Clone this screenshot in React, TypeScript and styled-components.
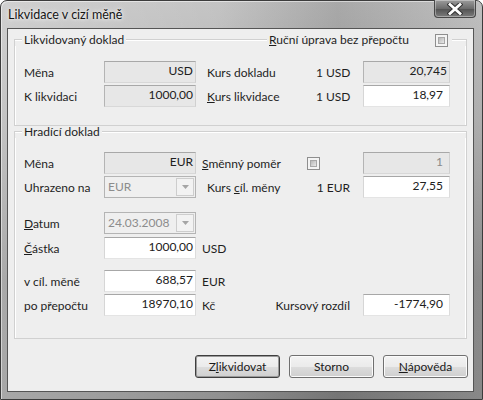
import React from "react";
import styled, { createGlobalStyle, css } from "styled-components";

const Global = createGlobalStyle`
  html, body { margin: 0; padding: 0; background: #ffffff; }
  body { font-family: "Lato", "Noto Sans", sans-serif; font-size: 12px; color: #1e1e1e; }
`;

const Window = styled.div`
  width: 483px;
  height: 400px;
  box-sizing: border-box;
  display: flex;
  flex-direction: column;
  border: 1px solid #3c3c3c;
  border-radius: 7px 7px 0 0;
  background:
    linear-gradient(to right, rgba(255,255,255,0.3), rgba(255,255,255,0.12) 45%, rgba(0,0,0,0.1) 70%, rgba(255,255,255,0.05)),
    linear-gradient(to bottom, #bcbcbc, #aaaaaa 30%, #858585 70%, #828282);
  box-shadow: inset 1px 1px 0 rgba(255,255,255,0.5);
`;

const TitleBar = styled.div`
  height: 27px;
  display: flex;
  justify-content: space-between;
  align-items: flex-start;
  padding: 0 6px 0 7px;
`;

const Title = styled.span`
  margin-top: 6px;
  font-size: 12.5px;
  color: #151515;
  text-shadow: 0 0 6px rgba(255,255,255,0.9), 0 0 3px rgba(255,255,255,0.8);
`;

const CloseButton = styled.div`
  width: 42px;
  height: 18px;
  box-sizing: border-box;
  margin-top: -1px;
  border: 1px solid #474747;
  border-top: none;
  border-radius: 0 0 4px 4px;
  background: linear-gradient(to bottom, #9c9c9c, #6c6c6c 50%, #545454 55%, #7c7c7c);
  box-shadow: inset 0 0 0 1px rgba(255,255,255,0.35);
  display: flex;
  align-items: center;
  justify-content: center;
`;

const Client = styled.div`
  flex: 1;
  margin: 0 8px 7px 6px;
  border: 1px solid #555555;
  background: #eeeeee;
  display: flex;
  flex-direction: column;
  padding: 5px 6px 0 6px;
`;

const GroupHeader = styled.div`
  height: 12px;
  display: flex;
  align-items: center;
`;

const Rule = styled.div<{ $edge?: "left" | "right"; $width?: number }>`
  align-self: flex-end;
  height: 6px;
  border-top: 1px solid #d0d0d0;
  box-shadow: inset 0 1px 0 #ffffff;
  ${(p) => (p.$width ? css`width: ${p.$width}px;` : css`flex: 1;`)}
  ${(p) => p.$edge === "left" && css`border-left: 1px solid #d0d0d0;`}
  ${(p) => p.$edge === "right" && css`border-right: 1px solid #d0d0d0;`}
`;

const Legend = styled.span<{ $gapAfter?: number }>`
  padding: 0 2px 0 2px;
  margin-right: ${(p) => p.$gapAfter ?? 0}px;
  line-height: 12px;
  white-space: nowrap;
`;

const GroupBody = styled.div<{ $top: number; $bottom: number }>`
  border: 1px solid #d0d0d0;
  border-top: none;
  box-shadow: inset 1px 0 0 #ffffff, inset -1px 0 0 #ffffff;
  padding: ${(p) => p.$top}px 15px ${(p) => p.$bottom}px 9px;
  display: flex;
  flex-direction: column;
`;

const Row = styled.div<{ $space?: number }>`
  display: grid;
  grid-template-columns: 80px 92px 6px 114px 47px 87px;
  grid-template-rows: 22px;
  align-items: center;
  margin-top: ${(p) => p.$space ?? 2}px;
  &:first-child { margin-top: 0; }
  & > * { grid-row: 1; }
`;

const Label = styled.span<{ $col?: number; $indent?: number; $span?: number; $right?: boolean }>`
  grid-column: ${(p) => p.$col ?? 1} / span ${(p) => p.$span ?? 1};
  padding-left: ${(p) => p.$indent ?? 0}px;
  white-space: nowrap;
  ${(p) => p.$right && css`text-align: right; padding-right: 13px;`}
`;

const Unit = styled.span`
  grid-column: 5;
  text-align: right;
  padding-right: 13px;
  white-space: nowrap;
`;

const Field = styled.div<{ $col: number; $edit?: boolean; $pad?: number; $dim?: boolean }>`
  grid-column: ${(p) => p.$col};
  height: 22px;
  box-sizing: border-box;
  border: 1px solid;
  text-align: right;
  line-height: 16px;
  padding: 1px ${(p) => p.$pad ?? 2}px 0 2px;
  color: ${(p) => (p.$dim ? "#8a8a8a" : "#202020")};
  ${(p) =>
    p.$edit
      ? css`
          background: #ffffff;
          border-color: #a7a7a7 #dcdcdc #e4e4e4 #d6d6d6;
        `
      : css`
          background: #e7e7e7;
          border-color: #a8a8a8 #d0d0d0 #d8d8d8 #b4b4b4;
        `}
`;

const Combo = styled.div`
  grid-column: 2;
  height: 22px;
  box-sizing: border-box;
  border: 1px solid #b4b4b4;
  background: #efefef;
  display: flex;
  align-items: stretch;
  color: #8c8c8c;
`;

const ComboText = styled.span`
  flex: 1;
  padding: 2px 0 0 3px;
  line-height: 16px;
`;

const ComboArrow = styled.div`
  width: 18px;
  margin: 1px;
  box-sizing: border-box;
  border: 1px solid #cdcdcd;
  background: #f2f2f2;
  display: flex;
  align-items: center;
  justify-content: center;
`;

const Check = styled.span`
  display: inline-block;
  width: 13px;
  height: 13px;
  box-sizing: border-box;
  border: 1px solid #8e8e8e;
  background: #f4f4f4;
  padding: 2px;
  &::after {
    content: "";
    display: block;
    width: 100%;
    height: 100%;
    background: linear-gradient(135deg, #b8b8b8, #e8e8e8);
    border: 1px solid #a8a8a8;
    box-sizing: border-box;
  }
`;

const CheckCell = styled.span`
  grid-column: 4 / span 2;
  display: grid;
  grid-template-columns: 105px 13px;
  align-items: center;
`;

const Key = styled.span`
  text-decoration: underline;
  text-underline-offset: 1px;
`;

const Buttons = styled.div`
  display: flex;
  justify-content: flex-end;
  gap: 9px;
  margin-top: 16px;
  margin-right: -1px;
`;

const Button = styled.div<{ $primary?: boolean }>`
  width: 85px;
  height: 23px;
  box-sizing: border-box;
  border: 1px solid ${(p) => (p.$primary ? "#3e3e3e" : "#707070")};
  border-radius: 3px;
  background: linear-gradient(to bottom, #f3f3f3, #ebebeb 50%, #dddddd 51%, #cfcfcf);
  box-shadow: inset 0 0 0 1px ${(p) => (p.$primary ? "#9a9a9a" : "#fbfbfb")};
  display: flex;
  align-items: center;
  justify-content: center;
  color: #1a1a1a;
`;

function Arrow() {
  return (
    <svg width="7" height="4" viewBox="0 0 7 4">
      <path d="M0 0 H7 L3.5 4 Z" fill="#a5a5a5" />
    </svg>
  );
}

export default function App() {
  return (
    <>
      <Global />
      <Window>
        <TitleBar>
          <Title>Likvidace v cizí měně</Title>
          <CloseButton>
            <svg width="16" height="12" viewBox="0 0 16 12">
              <path d="M3 1.5 L13 10.5 M13 1.5 L3 10.5" stroke="#333333" strokeWidth="4.8" strokeLinecap="square" />
              <path d="M3 1.5 L13 10.5 M13 1.5 L3 10.5" stroke="#ffffff" strokeWidth="2.8" strokeLinecap="square" />
            </svg>
          </CloseButton>
        </TitleBar>
        <Client>
          <GroupHeader>
            <Rule $edge="left" $width={7} />
            <Legend>Likvidovaný doklad</Legend>
            <Rule />
            <Legend $gapAfter={24}>
              <Key>R</Key>uční úprava bez přepočtu
            </Legend>
            <Check />
            <Legend />
            <Rule $edge="right" $width={14} />
          </GroupHeader>
          <GroupBody $top={15} $bottom={18}>
            <Row>
              <Label>Měna</Label>
              <Field $col={2}>USD</Field>
              <Label $col={4} $indent={5}>Kurs dokladu</Label>
              <Unit>1 USD</Unit>
              <Field $col={6} $pad={2}>20,745</Field>
            </Row>
            <Row>
              <Label>K likvidaci</Label>
              <Field $col={2}>1000,00</Field>
              <Label $col={4} $indent={5}>
                <Key>K</Key>urs likvidace
              </Label>
              <Unit>1 USD</Unit>
              <Field $col={6} $edit $pad={6}>18,97</Field>
            </Row>
          </GroupBody>

          <GroupHeader>
            <Rule $edge="left" $width={7} />
            <Legend>Hradící doklad</Legend>
            <Rule $edge="right" />
          </GroupHeader>
          <GroupBody $top={14} $bottom={22}>
            <Row>
              <Label>Měna</Label>
              <Field $col={2}>EUR</Field>
              <CheckCell>
                <span>
                  <Key>S</Key>měnný poměr
                </span>
                <Check />
              </CheckCell>
              <Field $col={6} $pad={6} $dim>1</Field>
            </Row>
            <Row>
              <Label>Uhrazeno na</Label>
              <Combo>
                <ComboText>EUR</ComboText>
                <ComboArrow>
                  <Arrow />
                </ComboArrow>
              </Combo>
              <Label $col={4} $indent={5}>
                Kurs <Key>c</Key>íl. měny
              </Label>
              <Unit>1 EUR</Unit>
              <Field $col={6} $edit $pad={6}>27,55</Field>
            </Row>
            <Row $space={14}>
              <Label>
                <Key>D</Key>atum
              </Label>
              <Combo>
                <ComboText>24.03.2008</ComboText>
                <ComboArrow>
                  <Arrow />
                </ComboArrow>
              </Combo>
            </Row>
            <Row $space={3}>
              <Label>
                <Key>Č</Key>ástka
              </Label>
              <Field $col={2} $edit>1000,00</Field>
              <Label $col={4}>USD</Label>
            </Row>
            <Row $space={11}>
              <Label>v cíl. měně</Label>
              <Field $col={2} $edit>688,57</Field>
              <Label $col={4}>EUR</Label>
            </Row>
            <Row>
              <Label>po přepočtu</Label>
              <Field $col={2} $edit>18970,10</Field>
              <Label $col={4}>Kč</Label>
              <Label $col={4} $span={2} $right>Kursový rozdíl</Label>
              <Field $col={6} $edit $pad={6}>-1774,90</Field>
            </Row>
          </GroupBody>

          <Buttons>
            <Button $primary>
              <span>
                Z<Key>l</Key>ikvidovat
              </span>
            </Button>
            <Button>Storno</Button>
            <Button>
              <span>
                <Key>N</Key>ápověda
              </span>
            </Button>
          </Buttons>
        </Client>
      </Window>
    </>
  );
}
